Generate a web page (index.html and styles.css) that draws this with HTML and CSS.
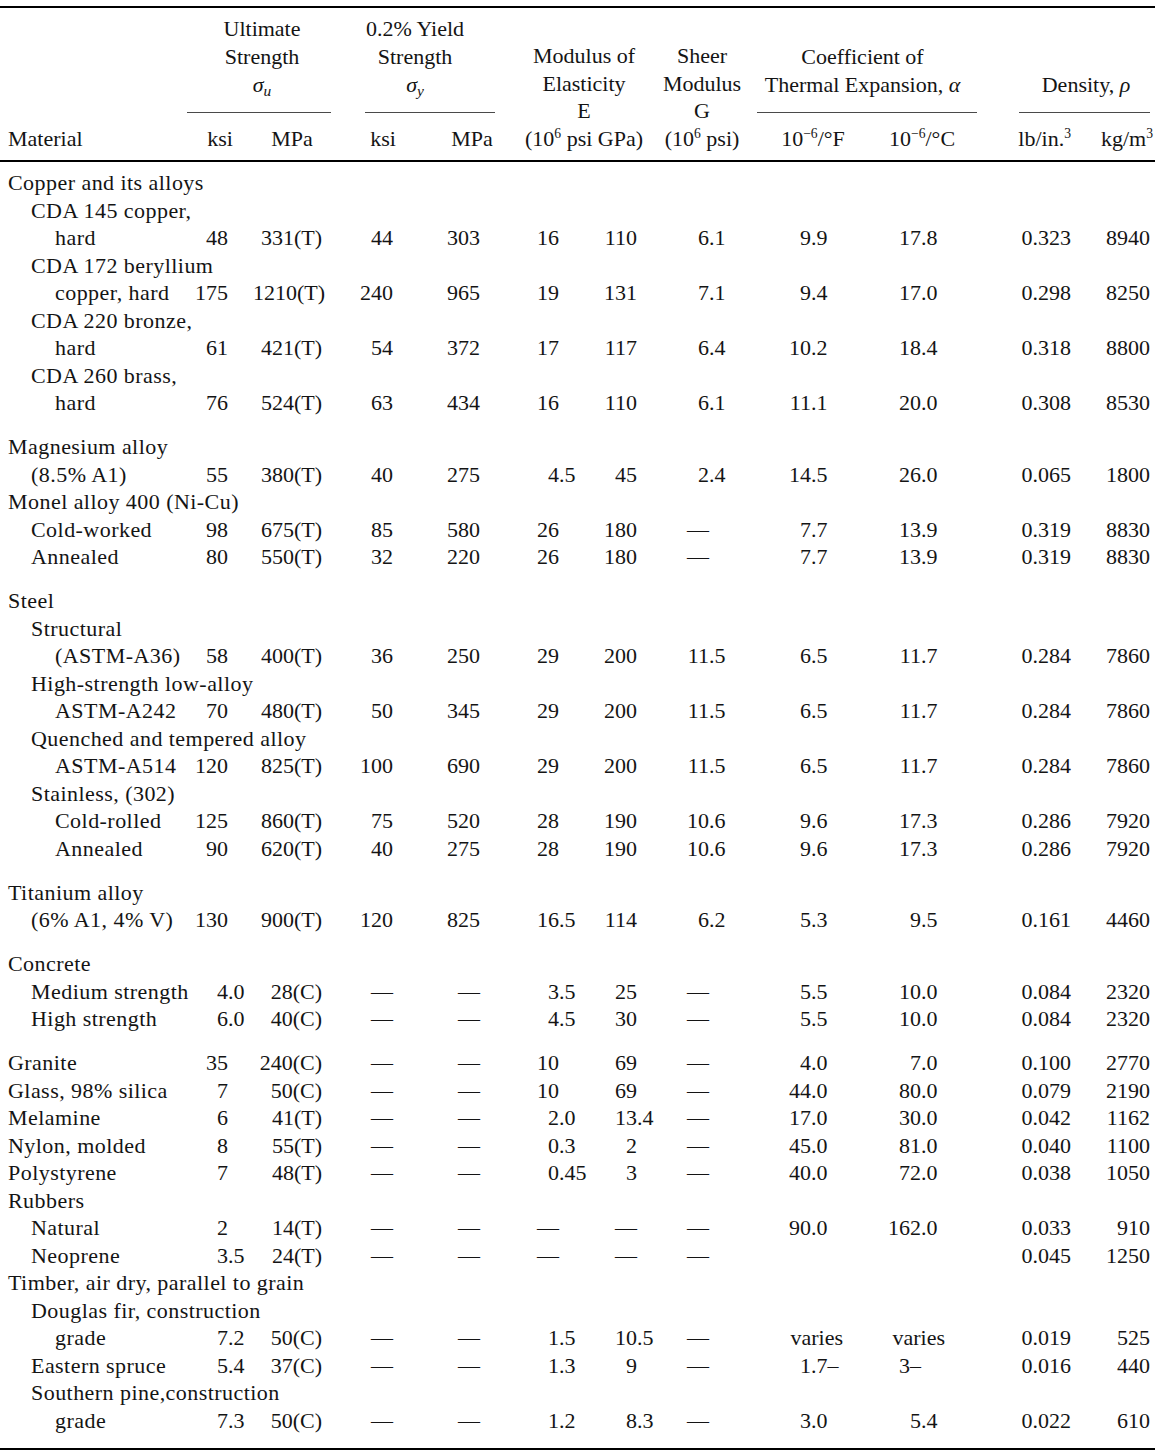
FILE: index.html
```html
<!DOCTYPE html>
<html lang="en">
<head>
<meta charset="utf-8">
<title>Average Mechanical Properties of Typical Engineering Materials</title>
<link rel="stylesheet" href="styles.css">
</head>
<body>
<table class="props">
  <colgroup>
    <col class="w1"><col class="w2"><col class="w3"><col class="w4"><col class="w5"><col class="w6">
    <col class="w7"><col class="w8"><col class="w9"><col class="w10"><col class="w11"><col class="w12">
  </colgroup>
  <thead>
    <tr class="h1">
      <th class="hm" rowspan="2">Material</th>
      <th class="grp ult" colspan="2"><div class="lines">Ultimate<br>Strength<br><i>σ<sub>u</sub></i></div><div class="rule"></div></th>
      <th class="grp yld" colspan="2"><div class="lines">0.2% Yield<br>Strength<br><i>σ<sub>y</sub></i></div><div class="rule"></div></th>
      <th class="hb" colspan="2" rowspan="2"><div class="lines mod">Modulus of<br>Elasticity<br>E<br>(10<sup>6</sup> psi GPa)</div></th>
      <th class="hb" rowspan="2"><div class="lines">Sheer<br>Modulus<br>G<br>(10<sup>6</sup> psi)</div></th>
      <th class="grp thm" colspan="2"><div class="lines">Coefficient of<br>Thermal Expansion, <i>α</i></div><div class="rule"></div></th>
      <th class="grp den" colspan="2"><div class="lines">Density, <i>ρ</i></div><div class="rule"></div></th>
    </tr>
    <tr class="h2">
      <th class="u">ksi</th>
      <th class="u">MPa</th>
      <th class="u">ksi</th>
      <th class="u">MPa</th>
      <th class="u">10<sup>−6</sup>/°F</th>
      <th class="u u-c">10<sup>−6</sup>/°C</th>
      <th class="u u-r1">lb/in.<sup>3</sup></th>
      <th class="u u-r2">kg/m<sup>3</sup></th>
    </tr>
  </thead>
  <tbody>
    <tr><td class="m">Copper and its alloys</td><td colspan="11"></td></tr>
    <tr><td class="m i1">CDA 145 copper,</td><td colspan="11"></td></tr>
    <tr><td class="m i2">hard</td><td>48</td><td>331(T)</td><td>44</td><td>303</td><td>16</td><td>110</td><td>6<span class="fr">.1</span></td><td>9<span class="fr">.9</span></td><td>17<span class="fr">.8</span></td><td>0.323</td><td>8940</td></tr>
    <tr><td class="m i1">CDA 172 beryllium</td><td colspan="11"></td></tr>
    <tr><td class="m i2">copper, hard</td><td>175</td><td>1210(T)</td><td>240</td><td>965</td><td>19</td><td>131</td><td>7<span class="fr">.1</span></td><td>9<span class="fr">.4</span></td><td>17<span class="fr">.0</span></td><td>0.298</td><td>8250</td></tr>
    <tr><td class="m i1">CDA 220 bronze,</td><td colspan="11"></td></tr>
    <tr><td class="m i2">hard</td><td>61</td><td>421(T)</td><td>54</td><td>372</td><td>17</td><td>117</td><td>6<span class="fr">.4</span></td><td>10<span class="fr">.2</span></td><td>18<span class="fr">.4</span></td><td>0.318</td><td>8800</td></tr>
    <tr><td class="m i1">CDA 260 brass,</td><td colspan="11"></td></tr>
    <tr><td class="m i2">hard</td><td>76</td><td>524(T)</td><td>63</td><td>434</td><td>16</td><td>110</td><td>6<span class="fr">.1</span></td><td>11<span class="fr">.1</span></td><td>20<span class="fr">.0</span></td><td>0.308</td><td>8530</td></tr>

    <tr class="gap"><td class="m">Magnesium alloy</td><td colspan="11"></td></tr>
    <tr><td class="m i1">(8.5% A1)</td><td>55</td><td>380(T)</td><td>40</td><td>275</td><td>4<span class="fr">.5</span></td><td>45</td><td>2<span class="fr">.4</span></td><td>14<span class="fr">.5</span></td><td>26<span class="fr">.0</span></td><td>0.065</td><td>1800</td></tr>
    <tr><td class="m">Monel alloy 400 (Ni-Cu)</td><td colspan="11"></td></tr>
    <tr><td class="m i1">Cold-worked</td><td>98</td><td>675(T)</td><td>85</td><td>580</td><td>26</td><td>180</td><td>—</td><td>7<span class="fr">.7</span></td><td>13<span class="fr">.9</span></td><td>0.319</td><td>8830</td></tr>
    <tr><td class="m i1">Annealed</td><td>80</td><td>550(T)</td><td>32</td><td>220</td><td>26</td><td>180</td><td>—</td><td>7<span class="fr">.7</span></td><td>13<span class="fr">.9</span></td><td>0.319</td><td>8830</td></tr>

    <tr class="gap"><td class="m">Steel</td><td colspan="11"></td></tr>
    <tr><td class="m i1">Structural</td><td colspan="11"></td></tr>
    <tr><td class="m i2">(ASTM-A36)</td><td>58</td><td>400(T)</td><td>36</td><td>250</td><td>29</td><td>200</td><td>11<span class="fr">.5</span></td><td>6<span class="fr">.5</span></td><td>11<span class="fr">.7</span></td><td>0.284</td><td>7860</td></tr>
    <tr><td class="m i1">High-strength low-alloy</td><td colspan="11"></td></tr>
    <tr><td class="m i2">ASTM-A242</td><td>70</td><td>480(T)</td><td>50</td><td>345</td><td>29</td><td>200</td><td>11<span class="fr">.5</span></td><td>6<span class="fr">.5</span></td><td>11<span class="fr">.7</span></td><td>0.284</td><td>7860</td></tr>
    <tr><td class="m i1">Quenched and tempered alloy</td><td colspan="11"></td></tr>
    <tr><td class="m i2">ASTM-A514</td><td>120</td><td>825(T)</td><td>100</td><td>690</td><td>29</td><td>200</td><td>11<span class="fr">.5</span></td><td>6<span class="fr">.5</span></td><td>11<span class="fr">.7</span></td><td>0.284</td><td>7860</td></tr>
    <tr><td class="m i1">Stainless, (302)</td><td colspan="11"></td></tr>
    <tr><td class="m i2">Cold-rolled</td><td>125</td><td>860(T)</td><td>75</td><td>520</td><td>28</td><td>190</td><td>10<span class="fr">.6</span></td><td>9<span class="fr">.6</span></td><td>17<span class="fr">.3</span></td><td>0.286</td><td>7920</td></tr>
    <tr><td class="m i2">Annealed</td><td>90</td><td>620(T)</td><td>40</td><td>275</td><td>28</td><td>190</td><td>10<span class="fr">.6</span></td><td>9<span class="fr">.6</span></td><td>17<span class="fr">.3</span></td><td>0.286</td><td>7920</td></tr>

    <tr class="gap"><td class="m">Titanium alloy</td><td colspan="11"></td></tr>
    <tr><td class="m i1">(6% A1, 4% V)</td><td>130</td><td>900(T)</td><td>120</td><td>825</td><td>16<span class="fr">.5</span></td><td>114</td><td>6<span class="fr">.2</span></td><td>5<span class="fr">.3</span></td><td>9<span class="fr">.5</span></td><td>0.161</td><td>4460</td></tr>

    <tr class="gap"><td class="m">Concrete</td><td colspan="11"></td></tr>
    <tr><td class="m i1">Medium strength</td><td>4<span class="fr">.0</span></td><td>28(C)</td><td>—</td><td>—</td><td>3<span class="fr">.5</span></td><td>25</td><td>—</td><td>5<span class="fr">.5</span></td><td>10<span class="fr">.0</span></td><td>0.084</td><td>2320</td></tr>
    <tr><td class="m i1">High strength</td><td>6<span class="fr">.0</span></td><td>40(C)</td><td>—</td><td>—</td><td>4<span class="fr">.5</span></td><td>30</td><td>—</td><td>5<span class="fr">.5</span></td><td>10<span class="fr">.0</span></td><td>0.084</td><td>2320</td></tr>

    <tr class="gap"><td class="m">Granite</td><td>35</td><td>240(C)</td><td>—</td><td>—</td><td>10</td><td>69</td><td>—</td><td>4<span class="fr">.0</span></td><td>7<span class="fr">.0</span></td><td>0.100</td><td>2770</td></tr>
    <tr><td class="m">Glass, 98% silica</td><td>7</td><td>50(C)</td><td>—</td><td>—</td><td>10</td><td>69</td><td>—</td><td>44<span class="fr">.0</span></td><td>80<span class="fr">.0</span></td><td>0.079</td><td>2190</td></tr>
    <tr><td class="m">Melamine</td><td>6</td><td>41(T)</td><td>—</td><td>—</td><td>2<span class="fr">.0</span></td><td>13<span class="fr">.4</span></td><td>—</td><td>17<span class="fr">.0</span></td><td>30<span class="fr">.0</span></td><td>0.042</td><td>1162</td></tr>
    <tr><td class="m">Nylon, molded</td><td>8</td><td>55(T)</td><td>—</td><td>—</td><td>0<span class="fr">.3</span></td><td>2</td><td>—</td><td>45<span class="fr">.0</span></td><td>81<span class="fr">.0</span></td><td>0.040</td><td>1100</td></tr>
    <tr><td class="m">Polystyrene</td><td>7</td><td>48(T)</td><td>—</td><td>—</td><td>0<span class="fr">.45</span></td><td>3</td><td>—</td><td>40<span class="fr">.0</span></td><td>72<span class="fr">.0</span></td><td>0.038</td><td>1050</td></tr>
    <tr><td class="m">Rubbers</td><td colspan="11"></td></tr>
    <tr><td class="m i1">Natural</td><td>2</td><td>14(T)</td><td>—</td><td>—</td><td>—</td><td>—</td><td>—</td><td>90<span class="fr">.0</span></td><td>162<span class="fr">.0</span></td><td>0.033</td><td>910</td></tr>
    <tr><td class="m i1">Neoprene</td><td>3<span class="fr">.5</span></td><td>24(T)</td><td>—</td><td>—</td><td>—</td><td>—</td><td>—</td><td></td><td></td><td>0.045</td><td>1250</td></tr>
    <tr><td class="m">Timber, air dry, parallel to grain</td><td colspan="11"></td></tr>
    <tr><td class="m i1">Douglas fir, construction</td><td colspan="11"></td></tr>
    <tr><td class="m i2">grade</td><td>7<span class="fr">.2</span></td><td>50(C)</td><td>—</td><td>—</td><td>1<span class="fr">.5</span></td><td>10<span class="fr">.5</span></td><td>—</td><td class="vf">varies</td><td class="vc">varies</td><td>0.019</td><td>525</td></tr>
    <tr><td class="m i1">Eastern spruce</td><td>5<span class="fr">.4</span></td><td>37(C)</td><td>—</td><td>—</td><td>1<span class="fr">.3</span></td><td>9</td><td>—</td><td>1<span class="fr">.7–</span></td><td>3–</td><td>0.016</td><td>440</td></tr>
    <tr><td class="m i1">Southern pine,construction</td><td colspan="11"></td></tr>
    <tr class="last"><td class="m i2">grade</td><td>7<span class="fr">.3</span></td><td>50(C)</td><td>—</td><td>—</td><td>1<span class="fr">.2</span></td><td>8<span class="fr">.3</span></td><td>—</td><td>3<span class="fr">.0</span></td><td>5<span class="fr">.4</span></td><td>0.022</td><td>610</td></tr>
  </tbody>
</table>
</body>
</html>
```
FILE: styles.css
```css
html, body {
  margin: 0;
  padding: 0;
  background: #ffffff;
}

body {
  color: #141414;
  font-family: "Liberation Serif", "Times New Roman", serif;
  font-size: 22px;
}

.props {
  width: 1155px;
  margin-top: 6px;
  border-collapse: collapse;
  table-layout: fixed;
  border-top: 2px solid #000;
  border-bottom: 2px solid #000;
}

.w1 { width: 187px; }
.w2 { width: 66px; }
.w3 { width: 78px; }
.w4 { width: 104px; }
.w5 { width: 74px; }
.w6 { width: 85px; }
.w7 { width: 65px; }
.w8 { width: 86px; }
.w9 { width: 136px; }
.w10 { width: 99px; }
.w11 { width: 110px; }
.w12 { width: 65px; }

/* ---------- header ---------- */
thead {
  border-bottom: 2px solid #000;
}

th {
  font-weight: normal;
  line-height: 27.75px;
  padding: 0;
  white-space: nowrap;
}

.h1 th {
  height: 111px;
  padding-top: 6px;
  vertical-align: bottom;
  text-align: center;
}

.h1 th.hm,
.h1 th.hb {
  height: auto;
  padding-top: 0;
  padding-bottom: 7px;
  vertical-align: bottom;
}

.h1 th.hm {
  text-align: left;
  padding-left: 8px;
}

.rule {
  height: 13px;
  border-bottom: 1.5px solid #4a4a4a;
  margin-bottom: 12.5px;
}

.ult .lines { padding-left: 6px; }
.ult .rule { margin-left: 0; margin-right: 0; }

.yld .lines { padding-right: 10px; }
.yld .rule { margin-left: 34px; margin-right: 14px; }

.thm .rule { margin-left: 12px; margin-right: 3px; }

.den .lines { padding-left: 37px; }
.den .rule { margin-left: 39px; margin-right: 5px; }

.h2 th {
  padding-bottom: 7px;
  text-align: center;
  vertical-align: bottom;
}

.h2 th.u-c { padding-right: 17px; }
.h2 th.u-r1 { text-align: right; padding-right: 19px; }
.h2 th.u-r2 { text-align: right; padding-right: 2px; }

sup {
  font-size: 0.62em;
  line-height: 0;
  vertical-align: 0.6em;
}

sub {
  font-size: 0.7em;
  line-height: 0;
  vertical-align: -0.25em;
}

/* ---------- body ---------- */
td {
  padding: 0;
  line-height: 27.5px;
  text-align: right;
  white-space: nowrap;
  vertical-align: bottom;
}

tbody tr:first-child td { padding-top: 7.5px; }
tbody tr.gap td { padding-top: 16.5px; }
tbody tr.last td { padding-bottom: 14px; }

td.m {
  text-align: left;
  padding-left: 8px;
  letter-spacing: 0.45px;
  overflow: visible;
}

td.m.i1 { padding-left: 31px; }
td.m.i2 { padding-left: 55px; }

tbody td:nth-child(2) { padding-right: 25px; }
tbody td:nth-child(3) { padding-right: 9px; }
tbody td:nth-child(4) { padding-right: 42px; }
tbody td:nth-child(5) { padding-right: 29px; }
tbody td:nth-child(6) { padding-right: 35px; }
tbody td:nth-child(7) { padding-right: 22px; }
tbody td:nth-child(8) { padding-right: 36px; }
tbody td:nth-child(9) { padding-right: 70px; }
tbody td:nth-child(10) { padding-right: 59px; }
tbody td:nth-child(11) { padding-right: 19px; }
tbody td:nth-child(12) { padding-right: 5px; }

tbody td.vf { padding-right: 38px; }
tbody td.vc { padding-right: 35px; }

.fr {
  display: inline-block;
  width: 0;
  text-align: left;
  white-space: nowrap;
}
```
